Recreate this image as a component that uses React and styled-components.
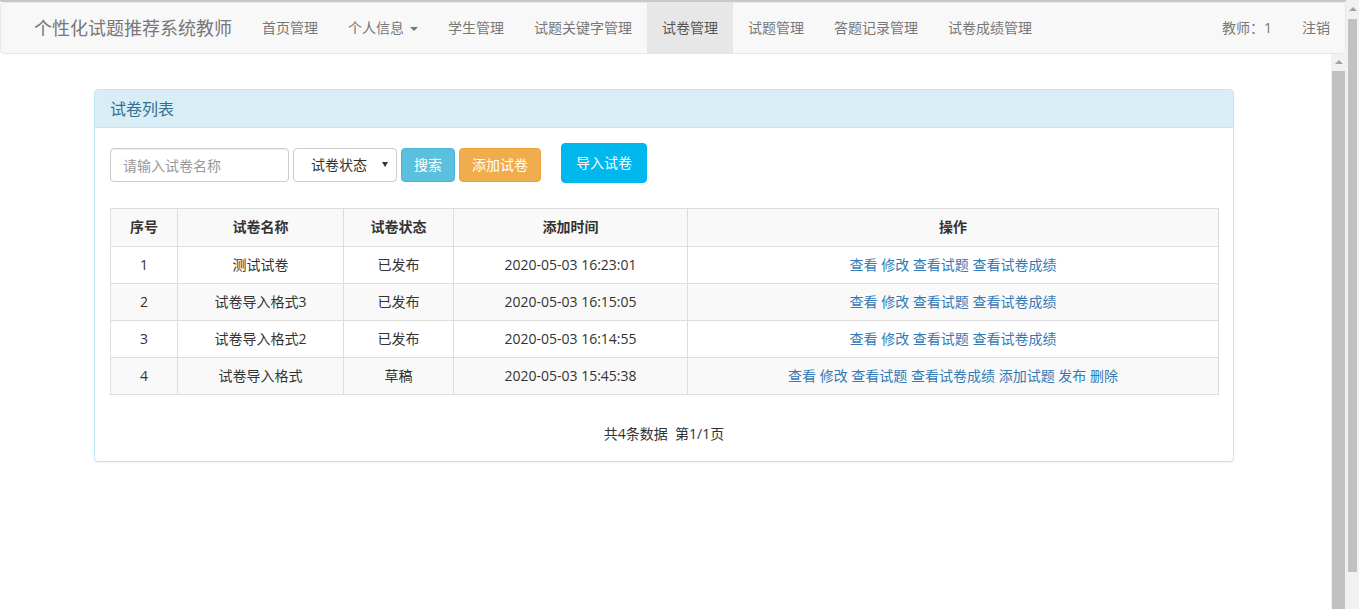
import React from "react";
import styled, { createGlobalStyle } from "styled-components";

const GlobalStyle = createGlobalStyle`
  html, body {
    margin: 0;
    padding: 0;
    overflow: hidden;
  }
  body {
    font-family: "Open Sans", "Noto Sans CJK SC", sans-serif;
    font-size: 14px;
    line-height: 20px;
    color: #333;
    background: #fff;
  }
  * {
    box-sizing: border-box;
  }
`;

const Shell = styled.div`
  display: flex;
  width: 1359px;
  height: 609px;
`;

const Main = styled.div`
  flex: 1;
  display: flex;
  flex-direction: column;
  min-width: 0;
`;

const TopEdge = styled.div`
  height: 2px;
  background: #c8c8c8;
`;

const Navbar = styled.nav`
  display: flex;
  height: 52px;
  background: #f8f8f8;
  border: 1px solid #e7e7e7;
  border-radius: 4px;
`;

const Brand = styled.a`
  padding: 15px 15px 15px 33px;
  font-size: 18px;
  line-height: 20px;
  color: #777;
  text-decoration: none;
  white-space: nowrap;
`;

const NavList = styled.ul`
  display: flex;
  margin: 0;
  padding: 0;
  list-style: none;
  margin-left: ${(p) => (p.$right ? "auto" : "0")};
`;

const NavLink = styled.a`
  display: flex;
  align-items: center;
  height: 50px;
  padding: 0 15px;
  color: ${(p) => (p.$active ? "#555" : "#777")};
  background: ${(p) => (p.$active ? "#e7e7e7" : "transparent")};
  text-decoration: none;
  white-space: nowrap;
`;

const Caret = styled.span`
  display: inline-block;
  width: 0;
  height: 0;
  margin-left: 6px;
  margin-top: 2px;
  border-top: 4px solid #777;
  border-left: 4px solid transparent;
  border-right: 4px solid transparent;
`;

const Frame = styled.div`
  flex: 1;
  display: flex;
  min-height: 0;
`;

const Content = styled.div`
  flex: 1;
  padding: 35px 0 0 94px;
  background: #fff;
`;

const ScrollTrack = styled.div`
  width: ${(p) => p.$w}px;
  display: flex;
  flex-direction: column;
  background: #f1f1f1;
`;

const ScrollButton = styled.div`
  height: ${(p) => p.$h}px;
  display: flex;
  align-items: center;
  justify-content: center;
  &::before {
    content: "";
    width: 0;
    height: 0;
    border-bottom: 4px solid #a3a3a3;
    border-left: 4px solid transparent;
    border-right: 4px solid transparent;
  }
`;

const Thumb = styled.div`
  background: #c1c1c1;
  margin: 1px ${(p) => p.$inset}px 0;
  height: ${(p) => (p.$h ? `${p.$h}px` : "auto")};
  flex: ${(p) => (p.$h ? "none" : "1")};
`;

const Panel = styled.div`
  width: 1140px;
  border: 1px solid #bce8f1;
  border-radius: 4px;
  background: #fff;
  box-shadow: 0 1px 1px rgba(0, 0, 0, 0.05);
`;

const PanelHeading = styled.div`
  padding: 11px 15px 9px;
  background: #d9edf7;
  border-bottom: 1px solid #bce8f1;
  border-radius: 3px 3px 0 0;
  color: #31708f;
  font-size: 16px;
  line-height: 17px;
`;

const PanelBody = styled.div`
  padding: 15px 15px 17px;
`;

const Toolbar = styled.div`
  display: flex;
  align-items: flex-start;
`;

const SearchForm = styled.form`
  display: flex;
  gap: 4px;
  margin-top: 5px;
`;

const TextInput = styled.input`
  width: 179px;
  height: 34px;
  padding: 6px 12px;
  border: 1px solid #ccc;
  border-radius: 4px;
  font: inherit;
  color: #555;
  box-shadow: inset 0 1px 1px rgba(0, 0, 0, 0.075);
  &::placeholder {
    color: #999;
  }
`;

const SelectBox = styled.div`
  width: 104px;
  height: 34px;
  display: flex;
  align-items: center;
  justify-content: space-between;
  padding: 0 8px 0 17px;
  border: 1px solid #ccc;
  border-radius: 4px;
  color: #333;
  &::after {
    content: "";
    width: 0;
    height: 0;
    border-top: 5px solid #333;
    border-left: 3.5px solid transparent;
    border-right: 3.5px solid transparent;
    margin-top: -2px;
  }
`;

const tones = {
  info: { bg: "#5bc0de", border: "#46b8da" },
  warning: { bg: "#f0ad4e", border: "#eea236" },
  import: { bg: "#00b7ee", border: "#00b7ee" },
};

const Button = styled.button`
  height: ${(p) => (p.$tall ? 40 : 34)}px;
  padding: 0 ${(p) => (p.$tall ? 14 : 12)}px;
  margin-left: ${(p) => (p.$tall ? 20 : 0)}px;
  background: ${(p) => tones[p.$tone].bg};
  border: 1px solid ${(p) => tones[p.$tone].border};
  border-radius: 4px;
  color: #fff;
  font: inherit;
  line-height: 20px;
  cursor: pointer;
`;

const Table = styled.table`
  width: 1108px;
  margin-top: 25px;
  border-collapse: collapse;
  table-layout: fixed;
`;

const Row = styled.tr`
  background: ${(p) => (p.$striped ? "#f9f9f9" : "#fff")};
`;

const HeadCell = styled.th`
  padding: 8px 8px 9px;
  border: 1px solid #ddd;
  font-weight: bold;
  text-align: center;
  line-height: 20px;
`;

const Cell = styled.td`
  padding: 8px;
  border: 1px solid #ddd;
  text-align: center;
  line-height: 20px;
  white-space: nowrap;
`;

const Action = styled.a`
  color: #337ab7;
  text-decoration: none;
`;

const Pager = styled.div`
  margin-top: 29px;
  text-align: center;
  line-height: 20px;
`;

const navItems = [
  { label: "首页管理" },
  { label: "个人信息", dropdown: true },
  { label: "学生管理" },
  { label: "试题关键字管理" },
  { label: "试卷管理", active: true },
  { label: "试题管理" },
  { label: "答题记录管理" },
  { label: "试卷成绩管理" },
];

const papers = [
  { id: 1, name: "测试试卷", state: "已发布", time: "2020-05-03 16:23:01", draft: false },
  { id: 2, name: "试卷导入格式3", state: "已发布", time: "2020-05-03 16:15:05", draft: false },
  { id: 3, name: "试卷导入格式2", state: "已发布", time: "2020-05-03 16:14:55", draft: false },
  { id: 4, name: "试卷导入格式", state: "草稿", time: "2020-05-03 15:45:38", draft: true },
];

function Actions({ draft }) {
  const list = ["查看", "修改", "查看试题", "查看试卷成绩"];
  if (draft) list.push("添加试题", "发布", "删除");
  return list.map((a, i) => (
    <React.Fragment key={a}>
      {i > 0 && " "}
      <Action href="#">{a}</Action>
    </React.Fragment>
  ));
}

export default function App() {
  return (
    <>
      <GlobalStyle />
      <Shell>
        <Main>
          <TopEdge />
          <Navbar>
            <Brand href="#">个性化试题推荐系统教师</Brand>
            <NavList>
              {navItems.map((item) => (
                <li key={item.label}>
                  <NavLink href="#" $active={item.active}>
                    {item.label}
                    {item.dropdown && <Caret />}
                  </NavLink>
                </li>
              ))}
            </NavList>
            <NavList $right>
              <li>
                <NavLink href="#">教师：1</NavLink>
              </li>
              <li>
                <NavLink href="#">注销</NavLink>
              </li>
            </NavList>
          </Navbar>
          <Frame>
            <Content>
              <Panel>
                <PanelHeading>试卷列表</PanelHeading>
                <PanelBody>
                  <Toolbar>
                    <SearchForm onSubmit={(e) => e.preventDefault()}>
                      <TextInput placeholder="请输入试卷名称" />
                      <SelectBox>试卷状态</SelectBox>
                      <Button type="button" $tone="info">搜索</Button>
                      <Button type="button" $tone="warning">添加试卷</Button>
                    </SearchForm>
                    <Button type="button" $tone="import" $tall>导入试卷</Button>
                  </Toolbar>
                  <Table>
                    <colgroup>
                      <col style={{ width: 67 }} />
                      <col style={{ width: 166 }} />
                      <col style={{ width: 110 }} />
                      <col style={{ width: 234 }} />
                      <col style={{ width: 531 }} />
                    </colgroup>
                    <tbody>
                      <Row $striped>
                        <HeadCell>序号</HeadCell>
                        <HeadCell>试卷名称</HeadCell>
                        <HeadCell>试卷状态</HeadCell>
                        <HeadCell>添加时间</HeadCell>
                        <HeadCell>操作</HeadCell>
                      </Row>
                      {papers.map((p, i) => (
                        <Row key={p.id} $striped={i % 2 === 1}>
                          <Cell>{p.id}</Cell>
                          <Cell>{p.name}</Cell>
                          <Cell>{p.state}</Cell>
                          <Cell>{p.time}</Cell>
                          <Cell>
                            <Actions draft={p.draft} />
                          </Cell>
                        </Row>
                      ))}
                    </tbody>
                  </Table>
                  <Pager>{"共4条数据\u00a0 第1/1页"}</Pager>
                </PanelBody>
              </Panel>
            </Content>
            <ScrollTrack $w={15}>
              <ScrollButton $h={16} />
              <Thumb $inset={1} />
            </ScrollTrack>
          </Frame>
        </Main>
        <ScrollTrack $w={13}>
          <ScrollButton $h={18} />
          <Thumb $inset={2} $h={553} />
        </ScrollTrack>
      </Shell>
    </>
  );
}
